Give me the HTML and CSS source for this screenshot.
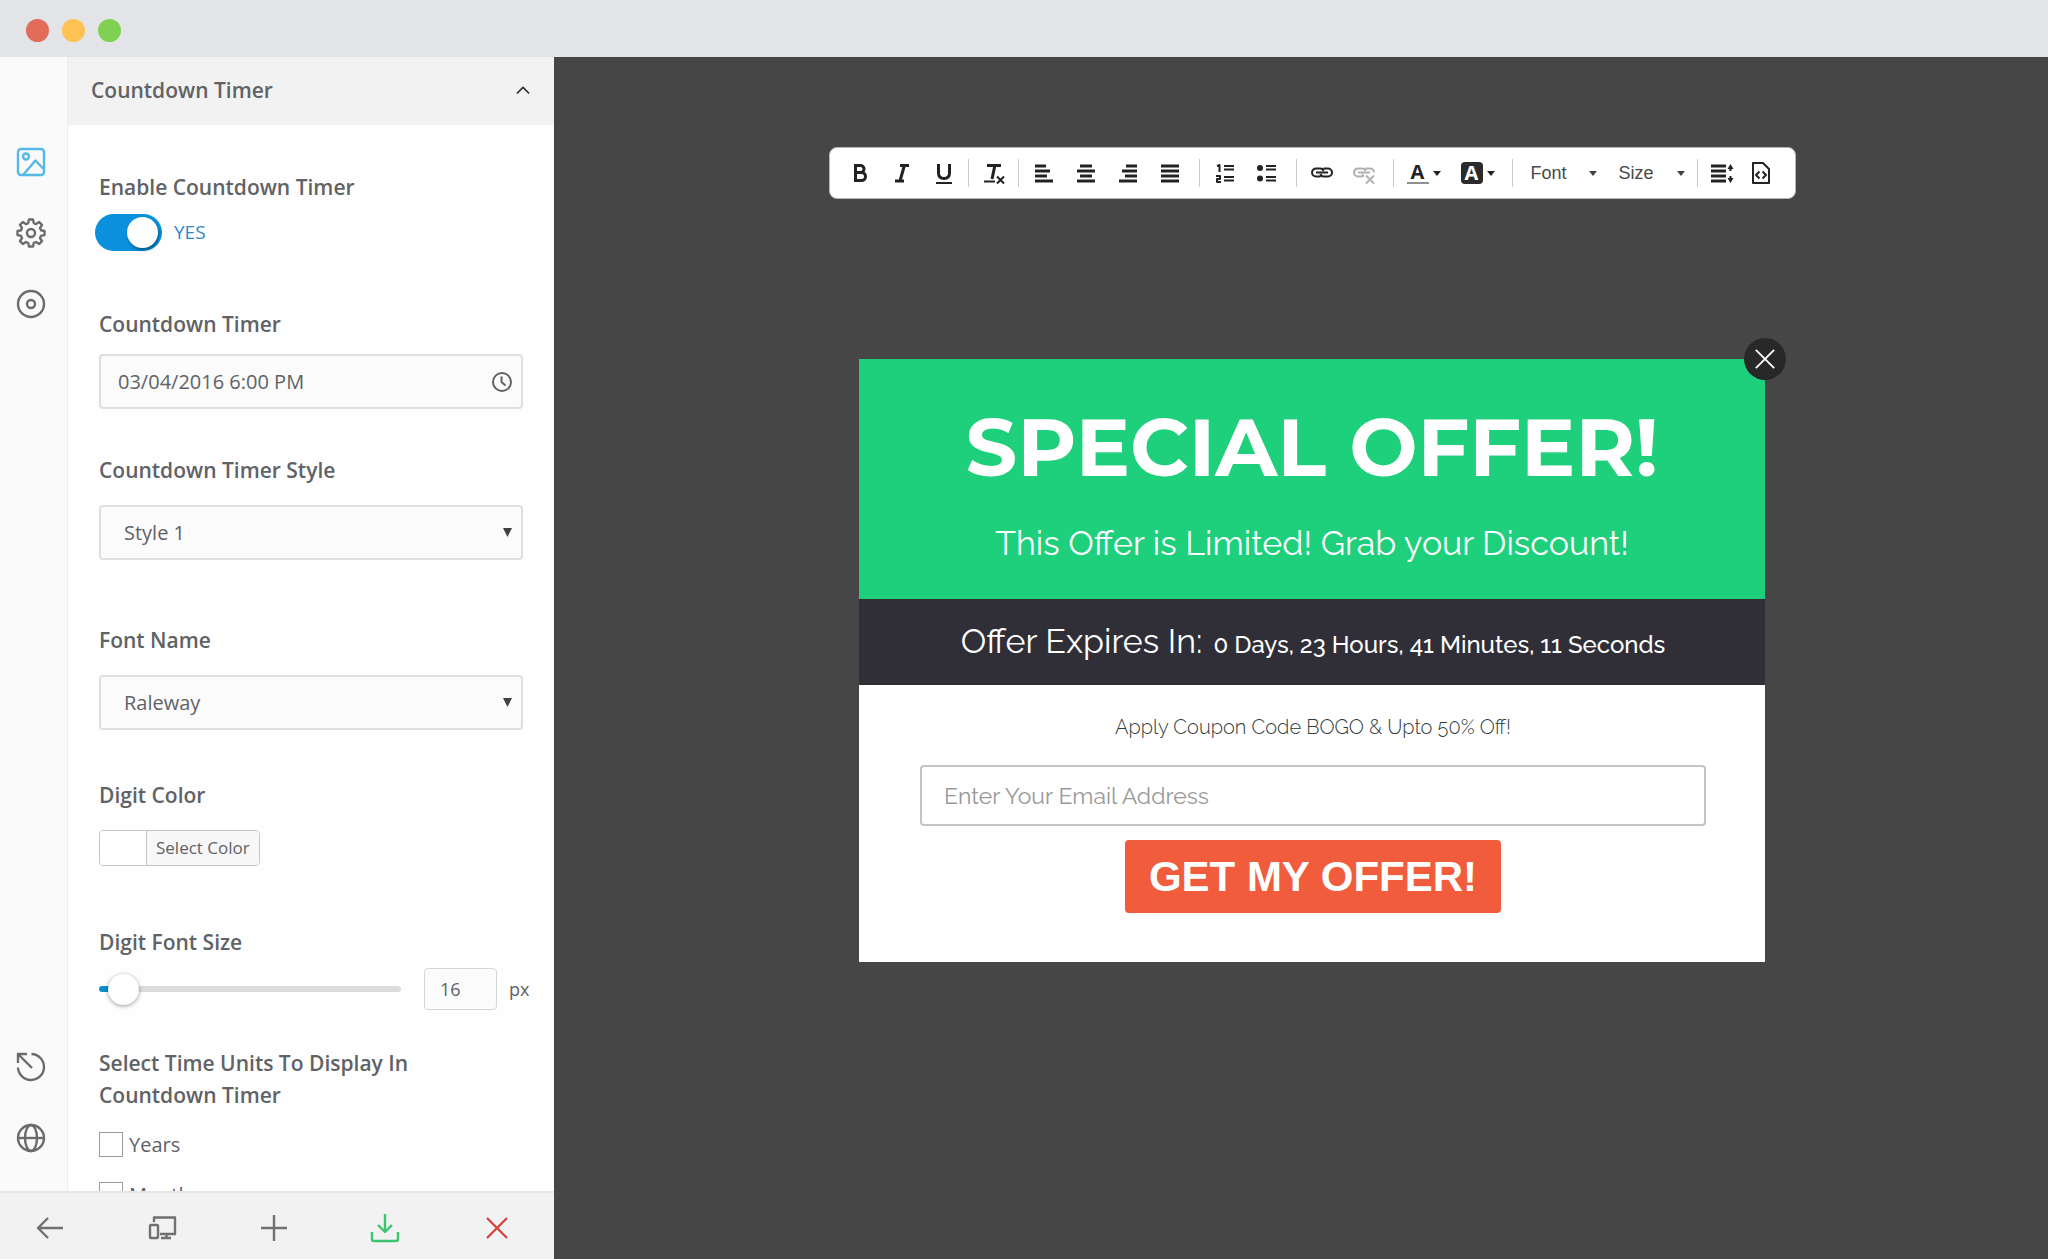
FILE: index.html
```html
<!DOCTYPE html>
<html lang="en">
<head>
    <meta charset="UTF-8">
    <meta name="viewport" content="width=device-width, initial-scale=1.0">
    <title>Countdown Timer</title>
    <link rel="stylesheet" href="styles.css">
</head>
<body>

    <header class="window-bar">
        <span class="dot red"></span>
        <span class="dot yellow"></span>
        <span class="dot green"></span>
    </header>

    <div class="workspace">
        <aside class="sidebar">
            <div class="sidebar-main">
                <!-- Icon rail -->
                <nav class="rail">
                    <a href="#" class="active" aria-label="Design">
                        <svg viewBox="0 0 30 30"><rect x="2" y="2" width="26" height="26" rx="3"/><circle cx="10" cy="9.500" r="3"/><path d="M7 28 19.500 13.500 27.500 22"/></svg>
                    </a>
                    <a href="#" aria-label="Settings">
                        <svg viewBox="0 0 30 30"><circle cx="15" cy="15" r="4"/><path d="M13 1.500h4l.8 3.600 2.200 1 3.200-2 2.800 2.800-2 3.200 1 2.200 3.500.7v4l-3.500.8-1 2.200 2 3.200-2.800 2.800-3.200-2-2.200 1-.8 3.500h-4l-.8-3.500-2.200-1-3.200 2L4 23.200 6 20l-1-2.200L1.500 17v-4l3.500-.7L6 10.100l-2-3.200 2.800-2.800 3.200 2 2.200-1z"/></svg>
                    </a>
                    <a href="#" aria-label="Behavior">
                        <svg viewBox="0 0 30 30"><circle cx="15" cy="15" r="13"/><circle cx="15" cy="15" r="4"/></svg>
                    </a>
                    <a href="#" class="rail-bottom" aria-label="History">
                        <svg viewBox="0 0 30 30"><path d="M15.500 2A13 13 0 1 1 2 15.500"/><path d="M16 16 3 3M2 11V2h9"/></svg>
                    </a>
                    <a href="#" aria-label="Language">
                        <svg viewBox="0 0 30 30"><circle cx="15" cy="15" r="13"/><ellipse cx="15" cy="15" rx="6" ry="13"/><path d="M2 15h26"/></svg>
                    </a>
                </nav>

                <section class="panel">
                    <button class="panel-header" type="button">
                        <span>Countdown Timer</span>
                        <svg viewBox="0 0 16 10"><path d="M1 9 8 2l7 7"/></svg>
                    </button>

                    <form class="panel-body">
                        <div class="field">
                            <label class="field-label" for="enable">Enable Countdown Timer</label>
                            <div class="switch-row">
                                <input class="switch" type="checkbox" id="enable" checked>
                                <span class="switch-text">YES</span>
                            </div>
                        </div>

                        <div class="field">
                            <label class="field-label" for="date">Countdown Timer</label>
                            <div class="date-box">
                                <input type="text" id="date" value="03/04/2016 6:00 PM">
                                <svg viewBox="0 0 20 20"><circle cx="10" cy="10" r="9"/><path d="M9.500 4.500V10l4 3.500"/></svg>
                            </div>
                        </div>

                        <div class="field">
                            <label class="field-label" for="style">Countdown Timer Style</label>
                            <select class="drop" id="style">
                                <option>Style 1</option>
                            </select>
                        </div>

                        <div class="field">
                            <label class="field-label" for="font-name">Font Name</label>
                            <select class="drop compact" id="font-name">
                                <option>Raleway</option>
                            </select>
                        </div>

                        <div class="field">
                            <label class="field-label" for="color">Digit Color</label>
                            <button class="color-btn" type="button" id="color">
                                <span class="swatch"></span>
                                <span class="color-text">Select Color</span>
                            </button>
                        </div>

                        <div class="field">
                            <label class="field-label" for="size-slider">Digit Font Size</label>
                            <div class="slider-row">
                                <input class="slider" type="range" id="size-slider" min="12" max="132" value="16">
                                <input class="size-input" type="text" value="16" aria-label="Digit font size in pixels">
                                <span class="unit">px</span>
                            </div>
                        </div>

                        <fieldset class="field units">
                            <legend class="field-label">Select Time Units To Display In Countdown Timer</legend>
                            <label class="check"><input type="checkbox"> Years</label>
                            <label class="check"><input type="checkbox"> Months</label>
                        </fieldset>
                    </form>
                </section>
            </div>

            <footer class="actions">
                <button type="button" aria-label="Back">
                    <svg viewBox="0 0 30 30"><path d="M28 15H3M13 5 3 15l10 10"/></svg>
                </button>
                <button type="button" aria-label="Responsive preview">
                    <svg viewBox="0 0 30 30"><path d="M7 9V4.500h21V21H13M14 25h10M19.500 21v4"/><rect x="3" y="12" width="8" height="13" rx="1"/></svg>
                </button>
                <button type="button" aria-label="Add">
                    <svg viewBox="0 0 30 30"><path d="M15 2v26M2 15h26"/></svg>
                </button>
                <button type="button" class="save" aria-label="Save">
                    <svg viewBox="0 0 30 30"><path d="M15 1v18M8 12l7 7 7-7M2 19v7q0 2 2 2h22q2 0 2-2v-7"/></svg>
                </button>
                <button type="button" class="close" aria-label="Close">
                    <svg viewBox="0 0 30 30"><path d="M5 5l20 20M25 5 5 25"/></svg>
                </button>
            </footer>
        </aside>

        <main class="stage">
            <div class="toolbar">
                <div class="group">
                    <button type="button" aria-label="Bold">
                        <svg viewBox="0 0 24 24"><path class="thick" d="M7.500 4.500h5a3.500 3.500 0 0 1 0 7h-5zM7.500 11.500h6a4 4 0 0 1 0 8h-6z"/></svg>
                    </button>
                    <button type="button" aria-label="Italic">
                        <svg viewBox="0 0 24 24"><path class="thick" d="M10 4.500h9M5 20h9M14.500 4 10 20"/></svg>
                    </button>
                    <button type="button" aria-label="Underline">
                        <svg viewBox="0 0 24 24"><path class="thick" d="M6.500 3v9q0 5.500 5.500 5.500t5.500-5.500V3"/><path d="M4 22h16"/></svg>
                    </button>
                </div>
                <div class="group">
                    <button type="button" aria-label="Remove format">
                        <svg viewBox="0 0 24 24"><path class="thick" d="M5 4.500h14M13 4 10 18"/><path d="M2 20.500h11M15 15.500l7 7M22 15.500l-7 7"/></svg>
                    </button>
                </div>
                <div class="group wide">
                    <button type="button" aria-label="Align left">
                        <svg viewBox="0 0 24 24"><path class="bars" d="M3 5h11M3 10h15M3 15h12M3 20h18"/></svg>
                    </button>
                    <button type="button" aria-label="Align center">
                        <svg viewBox="0 0 24 24"><path class="bars" d="M6 5h12M3 10h18M6 15h12M3 20h18"/></svg>
                    </button>
                    <button type="button" aria-label="Align right">
                        <svg viewBox="0 0 24 24"><path class="bars" d="M10 5h11M6 10h15M9 15h12M3 20h18"/></svg>
                    </button>
                    <button type="button" aria-label="Justify">
                        <svg viewBox="0 0 24 24"><path class="bars" d="M3 5h18M3 10h18M3 15h18M3 20h18"/></svg>
                    </button>
                </div>
                <div class="group wide">
                    <button type="button" aria-label="Numbered list">
                        <svg viewBox="0 0 24 24"><path d="M11 5h10M11 8.500h10M11 16h10M11 19.500h10M4 5l2.500-1v7M3 15h4v3H4v3h4"/></svg>
                    </button>
                    <button type="button" aria-label="Bulleted list">
                        <svg viewBox="0 0 24 24"><circle class="fill" cx="5" cy="7" r="3"/><circle class="fill" cx="5" cy="17.500" r="3"/><path d="M11 5h10M11 8.500h10M11 16h10M11 19.500h10"/></svg>
                    </button>
                </div>
                <div class="group wide">
                    <button type="button" aria-label="Link">
                        <svg viewBox="0 0 24 24"><path d="M10.500 15.500H6a4 4 0 0 1-4-4 4 4 0 0 1 4-4h4.500q2.500 0 3 2.500M13.500 7.500H18a4 4 0 0 1 4 4 4 4 0 0 1-4 4h-4.500q-2.500 0-3-2.500M6 11.500h12"/></svg>
                    </button>
                    <button type="button" class="off" aria-label="Unlink" disabled>
                        <svg viewBox="0 0 24 24"><path d="M10.500 15.500H6a4 4 0 0 1-4-4 4 4 0 0 1 4-4h4.500q2.500 0 3 2.500M13.500 7.500H18a4 4 0 0 1 4 4M12 15.500q-1.500-.5-1.500-2.500M6 11.500h12M14 14.500l8 8M22 14.500l-8 8"/></svg>
                    </button>
                </div>
                <div class="group colors">
                    <button type="button" aria-label="Text color">
                        <span class="letter">A</span>
                        <svg class="caret" viewBox="0 0 8 5"><path class="fill" d="M0 0h8L4 5z"/></svg>
                    </button>
                    <button type="button" aria-label="Background color">
                        <span class="letter inverse">A</span>
                        <svg class="caret" viewBox="0 0 8 5"><path class="fill" d="M0 0h8L4 5z"/></svg>
                    </button>
                </div>
                <div class="group pickers">
                    <select aria-label="Font"><option>Font</option></select>
                    <select aria-label="Size"><option>Size</option></select>
                </div>
                <div class="group last">
                    <button type="button" aria-label="Line height">
                        <svg viewBox="0 0 24 24"><path class="bars" d="M1 5h15M1 10h15M1 15h15M1 20h15"/><path d="M20.500 6v4M20.500 15v4"/><path class="fill" d="M17.500 8l3-5 3 5zM17.500 17l3 5 3-5z"/></svg>
                    </button>
                    <button type="button" aria-label="Source">
                        <svg viewBox="0 0 24 24"><path d="M4 2h10l6 6v14H4zM10.500 10.500 7 14l3.500 3.500M13.500 10.500 17 14l-3.500 3.500"/></svg>
                    </button>
                </div>
            </div>

            <div class="popup">
                <button class="popup-close" type="button" aria-label="Close popup">
                    <svg viewBox="0 0 24 24"><path d="M2 2l20 20M22 2 2 22"/></svg>
                </button>
                <div class="popup-top">
                    <h1>SPECIAL OFFER!</h1>
                    <p>This Offer is Limited! Grab your Discount!</p>
                </div>
                <div class="popup-timer">
                    <span class="timer-label">Offer Expires In:</span>
                    <span class="timer-value">0 Days, 23 Hours, 41 Minutes, 11 Seconds</span>
                </div>
                <form class="popup-form">
                    <p>Apply Coupon Code BOGO &amp; Upto 50% Off!</p>
                    <input type="email" placeholder="Enter Your Email Address" aria-label="Email address">
                    <button type="button">GET MY OFFER!</button>
                </form>
            </div>
        </main>
    </div>

</body>
</html>
```

FILE: styles.css
```css
* {
    box-sizing: border-box;
}

body {
    margin: 0;
    height: 100vh;
    display: flex;
    flex-direction: column;
    font-family: "Open Sans", "Noto Sans", sans-serif;
    font-size: 20px;
    color: #606266;
    background-color: #464646;
}

button,
input,
select {
    font-family: inherit;
    font-size: inherit;
    color: inherit;
}

button {
    padding: 0;
    border: none;
    background: none;
    cursor: pointer;
}

svg {
    display: block;
    fill: none;
    stroke: currentColor;
    stroke-width: 2;
    stroke-linejoin: round;
}

/* Window bar */
.window-bar {
    display: flex;
    align-items: center;
    gap: 13px;
    flex: none;
    height: 57px;
    padding: 3px 26px 0;
    background-color: #e3e4e7;
}

.dot {
    width: 23px;
    height: 23px;
    border-radius: 50%;
}

.dot.red {
    background-color: #e36b59;
}

.dot.yellow {
    background-color: #fdc154;
}

.dot.green {
    background-color: #80d153;
}

.workspace {
    display: flex;
    flex: 1;
    min-height: 0;
}

/* Sidebar */
.sidebar {
    display: flex;
    flex-direction: column;
    flex: none;
    width: 554px;
    background-color: #fefefe;
}

.sidebar-main {
    display: flex;
    flex: 1;
    min-height: 0;
}

.rail {
    display: flex;
    flex-direction: column;
    align-items: center;
    gap: 41px;
    flex: none;
    width: 68px;
    padding: 90px 5px 38px 0;
    background-color: #fafafa;
    border-right: 1px solid #eeeeee;
}

.rail a {
    color: #6b6b6b;
}

.rail a.active {
    color: #55b8ea;
}

.rail svg,
.actions svg {
    width: 30px;
    height: 30px;
    stroke-width: 2.4;
}

.rail-bottom {
    margin-top: auto;
}

.panel {
    flex: 1;
    min-width: 0;
    overflow: hidden;
}

.panel-header {
    display: flex;
    align-items: center;
    justify-content: space-between;
    width: 100%;
    height: 68px;
    padding: 0 24px 2px 23px;
    background-color: #f2f2f2;
    font-size: 21px;
    font-weight: 600;
}

.panel-header svg {
    width: 14px;
    height: 10px;
    color: #333333;
}

.panel-body {
    display: flex;
    flex-direction: column;
    padding: 46px 31px 0;
}

.field {
    display: flex;
    flex-direction: column;
    align-items: flex-start;
    gap: 14px;
    margin-bottom: 45px;
}

.field-label {
    font-size: 21px;
    font-weight: 600;
    line-height: 32px;
}

.switch-row {
    display: flex;
    align-items: center;
    gap: 12px;
    height: 46px;
    margin: -8px 0 8px -4px;
}

.switch {
    appearance: none;
    width: 67px;
    height: 37px;
    margin: 0;
    padding: 3px 4px;
    border-radius: 19px;
    background-color: #0a90dc;
}

.switch::before {
    content: "";
    display: block;
    width: 31px;
    height: 31px;
    margin-left: auto;
    border-radius: 50%;
    background-color: #ffffff;
    box-shadow: 1px 2px 3px rgba(0, 0, 0, 0.4);
}

.switch-text {
    color: #2f86c9;
    font-size: 19px;
}

.date-box,
.drop {
    width: 100%;
    height: 55px;
    border: 2px solid #dfdfdf;
    border-radius: 4px;
    background-color: #fbfbfb;
}

.date-box {
    display: flex;
    align-items: center;
    padding: 0 9px 0 17px;
}

.date-box input {
    flex: 1;
    min-width: 0;
    padding: 0;
    border: none;
    background: none;
}

.date-box svg {
    width: 20px;
    height: 20px;
}

.drop {
    appearance: none;
    margin: 5px 0 19px;
    padding: 0 23px;
    background-image: url("data:image/svg+xml,%3Csvg xmlns='http://www.w3.org/2000/svg' viewBox='0 0 10 10'%3E%3Cpath d='M0 0h10L5 10z' fill='%23404040'/%3E%3C/svg%3E");
    background-repeat: no-repeat;
    background-size: 9px 9px;
    background-position: right 9px center;
}

.drop.compact {
    margin-bottom: 4px;
}

.color-btn {
    display: flex;
    height: 36px;
    margin: 5px 0 15px;
    border: 1px solid #c6c6c6;
    border-radius: 4px;
    overflow: hidden;
}

.swatch {
    width: 46px;
    background-color: #ffffff;
}

.color-text {
    padding: 0 9px;
    border-left: 1px solid #c6c6c6;
    background-color: #f7f7f7;
    font-size: 17px;
    line-height: 34px;
}

.slider-row {
    display: flex;
    align-items: center;
    align-self: stretch;
    height: 42px;
    margin: -4px -6px -8px 0;
}

.slider {
    appearance: none;
    flex: 1;
    min-width: 0;
    height: 6px;
    margin: 0 23px 0 0;
    border-radius: 3px;
    background: linear-gradient(to right, #0a90cc 24px, #dcdcdc 24px);
}

.slider::-webkit-slider-thumb {
    appearance: none;
    width: 31px;
    height: 31px;
    border-radius: 50%;
    background-color: #ffffff;
    box-shadow: 0 1px 4px rgba(0, 0, 0, 0.4);
}

.size-input {
    width: 73px;
    height: 42px;
    padding: 0 15px;
    border: 1px solid #d5d5d5;
    border-radius: 4px;
    background-color: #fbfbfb;
    font-size: 18px;
}

.unit {
    width: 20px;
    margin-left: 12px;
    font-size: 18px;
}

.units {
    padding: 0;
    border: none;
    margin: 0;
    gap: 25px;
}

.units legend {
    padding: 0;
    margin-bottom: 21px;
}

.check {
    display: flex;
    align-items: center;
    gap: 6px;
    height: 25px;
}

.check input {
    appearance: none;
    width: 24px;
    height: 25px;
    margin: 0;
    border: 1px solid #9a9a9a;
    background-color: #ffffff;
}

.actions {
    display: flex;
    justify-content: space-between;
    align-items: center;
    flex: none;
    height: 68px;
    padding: 4px 42px 0 35px;
    background-color: #f2f2f2;
    border-top: 2px solid #e6e6e6;
    color: #707070;
}

.actions .save {
    color: #3dc46e;
}

.actions .close {
    color: #d64541;
}

/* Stage */
.stage {
    display: flex;
    flex-direction: column;
    align-items: center;
    flex: 1;
    min-width: 0;
    padding: 90px 0 0 22px;
}

.toolbar {
    display: flex;
    align-items: center;
    flex: none;
    height: 52px;
    padding-left: 5px;
    border: 1px solid #b5b5b5;
    border-radius: 8px;
    background-color: #ffffff;
    color: #222222;
}

.group {
    display: flex;
    align-items: center;
    height: 28px;
    padding: 0 3px 0 4px;
    border-right: 1px solid #cccccc;
}

.group.wide {
    padding-right: 8px;
}

.group.colors {
    gap: 20px;
    padding: 0 17px 0 13px;
}

.group.pickers {
    gap: 22px;
    padding: 0 12px 0 18px;
}

.group.last {
    gap: 15px;
    padding: 0 22px 0 12px;
    border-right: none;
}

.group button {
    display: flex;
    justify-content: center;
    align-items: center;
    width: 42px;
}

.group svg {
    width: 24px;
    height: 24px;
}

.group.colors button,
.group.last button {
    width: auto;
}

.group .off {
    color: #b0b0b0;
}

.letter {
    width: 22px;
    height: 22px;
    margin-right: 4px;
    border-bottom: 2px solid #909090;
    font-size: 20px;
    font-weight: 700;
    line-height: 20px;
}

.letter.inverse {
    border: none;
    border-radius: 4px;
    background-color: #2b2b2b;
    color: #ffffff;
    line-height: 22px;
}

.group .caret {
    width: 8px;
    height: 5px;
}

.group select {
    appearance: none;
    width: 66px;
    padding: 0;
    border: none;
    color: #484848;
    font-family: "Liberation Sans", Arial, sans-serif;
    font-size: 18px;
    background: url("data:image/svg+xml,%3Csvg xmlns='http://www.w3.org/2000/svg' viewBox='0 0 8 5'%3E%3Cpath d='M0 0h8L4 5z' fill='%23404040'/%3E%3C/svg%3E") no-repeat right center;
    background-size: 8px 5px;
}

.thick {
    stroke-width: 3;
    stroke-linejoin: miter;
}

.bars {
    stroke-width: 3;
}

.fill {
    fill: currentColor;
    stroke: none;
}

/* Popup */
.popup {
    position: relative;
    width: 906px;
    max-width: 100%;
    margin-top: 160px;
    background-color: #ffffff;
    color: #ffffff;
    font-family: "Raleway", "Lato", sans-serif;
    text-align: center;
}

.popup-close {
    position: absolute;
    top: -21px;
    right: -21px;
    display: flex;
    align-items: center;
    justify-content: center;
    width: 42px;
    height: 42px;
    border-radius: 50%;
    background-color: #282828;
    color: #ffffff;
}

.popup-close svg {
    width: 22px;
    height: 22px;
}

.popup-top {
    height: 240px;
    padding-top: 40px;
    background-color: #1ecf7b;
}

.popup-top h1 {
    margin: 0;
    font-family: "Montserrat", "Inter", sans-serif;
    font-size: 81px;
    font-weight: 700;
    line-height: 96px;
}

.popup-top p {
    margin: 28px 0 0;
    font-size: 34px;
    line-height: 40px;
}

.popup-timer {
    display: flex;
    align-items: baseline;
    justify-content: center;
    gap: 11px;
    height: 86px;
    padding: 22px 0 0 2px;
    background-color: #302f38;
}

.timer-label {
    font-size: 34px;
    line-height: 40px;
}

.timer-value {
    font-size: 24px;
    font-weight: 500;
}

.popup-form {
    display: flex;
    flex-direction: column;
    align-items: center;
    padding: 28px 59px 49px 61px;
}

.popup-form p {
    margin: 0 0 24px;
    color: #2c3a3a;
    font-weight: 300;
    font-size: 20px;
    line-height: 28px;
}

.popup-form input {
    width: 100%;
    height: 61px;
    margin-bottom: 14px;
    padding: 0 22px;
    border: 2px solid #c4c4c4;
    border-radius: 4px;
    color: #444444;
    font-size: 23px;
}

.popup-form input::placeholder {
    color: #999999;
}

.popup-form button {
    height: 73px;
    padding: 0 24px;
    border-radius: 4px;
    background-color: #f15c3c;
    color: #ffffff;
    font-family: "Liberation Sans", Arial, sans-serif;
    font-size: 42px;
    font-weight: 700;
}
```
